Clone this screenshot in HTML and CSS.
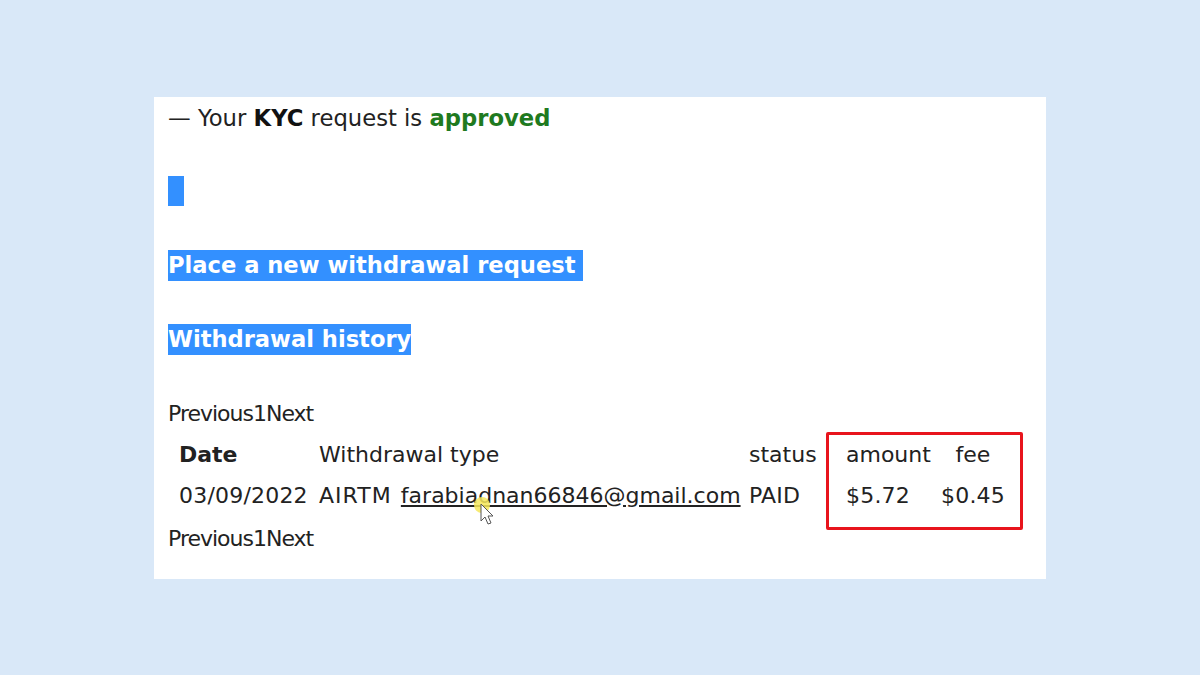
FILE: index.html
```html
<!DOCTYPE html>
<html lang="en">
<head>
  <meta charset="UTF-8" />
  <meta name="viewport" content="width=device-width, initial-scale=1.0" />
  <title>Withdrawals</title>
  <link rel="stylesheet" href="styles.css">
</head>
<body>
  <div class="page">
    <p class="kyc">— Your <strong>KYC</strong> request is <strong class="ok">approved</strong></p>

    <div class="sel-block"></div>

    <h3 class="sel-title">Place a new withdrawal request&nbsp;</h3>
    <h3 class="sel-title second">Withdrawal history</h3>

    <div class="pager top">Previous1Next</div>

    <div class="history">
      <table class="history-table">
        <tr>
          <th class="c-date bold">Date</th>
          <th class="c-type">Withdrawal type</th>
          <th class="c-status">status</th>
          <th class="c-amount">amount</th>
          <th class="c-fee center">fee</th>
        </tr>
        <tr class="data">
          <td>03/09/2022</td>
          <td><span class="method">AIRTM</span> <a href="#">farabiadnan66846@gmail.com</a></td>
          <td>PAID</td>
          <td>$5.72</td>
          <td>$0.45</td>
        </tr>
      </table>

      <div class="mark"></div>

      <svg class="cursor" width="30" height="34" viewBox="0 0 30 34">
        <circle cx="10" cy="8" r="8" fill="#f6e75a" opacity="0.85"/>
        <path d="M9 7 L9 24 L13 20 L16 27 L19 26 L16 19 L21 19 Z" fill="#fff" stroke="#555" stroke-width="1"/>
      </svg>
    </div>

    <div class="pager bottom">Previous1Next</div>
  </div>
</body>
</html>
```

FILE: styles.css
```css
body {
  margin: 0;
  background: #d9e8f8;
  font-family: "DejaVu Sans", Verdana, sans-serif;
  color: #222;
  height: 675px;
  display: flex;
  align-items: center;
  justify-content: center;
}
.page {
  width: 864px;
  height: 476px;
  background: white;
  padding: 6px 14px 0;
}
.kyc {
  margin: 0;
  font-size: 22.7px;
  line-height: 30px;
}
.kyc strong { color: #111; }
.kyc .ok { color: #1f7a1f; }
.sel-block {
  width: 16px;
  height: 30px;
  margin-top: 43px;
  background: #3390ff;
}
.sel-title {
  display: inline-block;
  margin: 44px 0 0;
  font-size: 22.6px;
  line-height: 31px;
  color: white;
  background: #3390ff;
}
.sel-title.second {
  display: table;
  margin-top: 43px;
}
.pager {
  font-size: 22px;
  line-height: 28px;
  letter-spacing: -1px;
}
.pager.top { margin-top: 45px; }
.pager.bottom { margin-top: 9px; }
.history {
  position: relative;
  margin-top: 6px;
}
.history-table {
  border-collapse: collapse;
  table-layout: fixed;
  margin-left: 11px;
  font-size: 22px;
}
.history-table th,
.history-table td {
  padding: 0;
  height: 41px;
  text-align: left;
  font-weight: normal;
  white-space: nowrap;
}
.history-table .data td { letter-spacing: 0.2px; }
.history-table .data a { letter-spacing: 0; }
.history-table .method { letter-spacing: 1px; margin-right: 2px; }
.history-table th.bold { font-weight: bold; }
.history-table th.center { text-align: center; }
.c-date { width: 140px; }
.c-type { width: 430px; }
.c-status { width: 97px; }
.c-amount { width: 95px; }
.c-fee { width: 64px; }
.history-table a {
  color: #222;
  text-decoration: underline;
}
.mark {
  position: absolute;
  left: 658px;
  top: -2px;
  width: 191px;
  height: 92px;
  border: 3px solid #e8141c;
  border-radius: 2px;
}
.cursor {
  position: absolute;
  left: 304px;
  top: 63px;
}
```
